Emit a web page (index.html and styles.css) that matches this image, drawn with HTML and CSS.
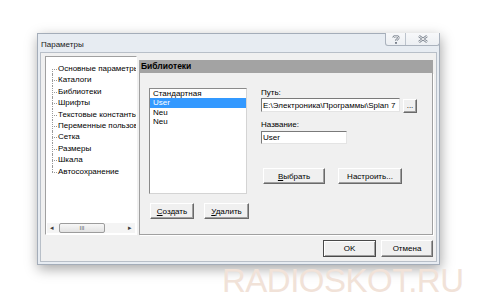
FILE: index.html
```html
<!DOCTYPE html>
<html lang="ru">
<head>
    <meta charset="UTF-8">
    <meta name="viewport" content="width=device-width, initial-scale=1.0">
    <title>Параметры</title>
    <link rel="stylesheet" href="styles.css">
</head>
<body>

<!-- Окно параметров -->
<div class="window">
    <div class="titlebar">
        <span class="title">Параметры</span>
        <div class="caption-buttons">
            <span class="cap-btn cap-help">
                <svg width="8" height="9" viewBox="0 0 8 9">
                    <path d="M1.5 2.8 C1.5 0.6 6.5 0.6 6.5 2.8 C6.5 4.4 4 4.2 4 6" fill="none" stroke="#7a828e" stroke-width="2.2"/>
                    <path d="M1.5 2.8 C1.5 0.6 6.5 0.6 6.5 2.8 C6.5 4.4 4 4.2 4 6" fill="none" stroke="#fff" stroke-width="0.9"/>
                    <rect x="3" y="7" width="2" height="1.8" fill="#7a828e"/>
                </svg>
            </span>
            <span class="cap-btn cap-close">
                <svg width="10" height="8" viewBox="0 0 10 8">
                    <path d="M1 1 L9 7 M9 1 L1 7" stroke="#7a828e" stroke-width="2.4"/>
                    <path d="M1 1 L9 7 M9 1 L1 7" stroke="#fff" stroke-width="0.9"/>
                </svg>
            </span>
        </div>
    </div>

    <div class="client">
        <div class="main-row">
            <!-- Дерево разделов -->
            <div class="tree">
                <ul class="tree-list">
                    <li>Основные параметры</li>
                    <li>Каталоги</li>
                    <li>Библиотеки</li>
                    <li>Шрифты</li>
                    <li>Текстовые константы</li>
                    <li>Переменные пользователя</li>
                    <li>Сетка</li>
                    <li>Размеры</li>
                    <li>Шкала</li>
                    <li>Автосохранение</li>
                </ul>
                <div class="hscroll">
                    <span class="arrow">&#9666;</span>
                    <span class="thumb">III</span>
                    <span class="track"></span>
                    <span class="arrow">&#9656;</span>
                </div>
            </div>

            <!-- Страница "Библиотеки" -->
            <div class="page">
                <div class="page-header">Библиотеки</div>
                <div class="page-body">
                    <div class="lib-col">
                        <ul class="listbox">
                            <li>Стандартная</li>
                            <li class="selected">User</li>
                            <li>Neu</li>
                            <li>Neu</li>
                        </ul>
                        <div class="lib-buttons">
                            <button class="btn btn-create"><u>С</u>оздать</button>
                            <button class="btn btn-delete"><u>У</u>далить</button>
                        </div>
                    </div>

                    <div class="props-col">
                        <label class="field-label">Путь:</label>
                        <div class="path-row">
                            <input type="text" class="text-field path-field" value="E:\Электроника\Программы\Splan 7">
                            <button class="btn btn-browse">...</button>
                        </div>
                        <label class="field-label name-label">Название:</label>
                        <input type="text" class="text-field name-field" value="User">
                        <div class="props-buttons">
                            <button class="btn btn-select"><u>В</u>ыбрать</button>
                            <button class="btn btn-setup">Настроить...</button>
                        </div>
                    </div>
                </div>
            </div>
        </div>

        <div class="footer">
            <button class="btn btn-ok">OK</button>
            <button class="btn btn-cancel">Отмена</button>
        </div>
    </div>
</div>

<div class="watermark">RADIOSKOT.RU</div>

</body>
</html>
```

FILE: styles.css
```css
/* Общий стиль страницы */
body {
    margin: 0;
    padding: 33px 0 0 37px;
    background-color: #ffffff;
    font-family: 'Liberation Sans', Arial, sans-serif;
    font-size: 8px;
    color: #000;
}

ul {
    list-style: none;
    margin: 0;
    padding: 0;
}

/* Окно */
.window {
    width: 403px;
    height: 232px;
    box-sizing: border-box;
    border: 1px solid #a4adb9;
    background-color: #e7ecf2;
    padding: 0 2px 2px 2px;
    display: flex;
    flex-direction: column;
    box-shadow: 1px 4px 12px rgba(0, 0, 0, 0.35);
}

.titlebar {
    height: 18px;
    display: flex;
    justify-content: space-between;
    align-items: flex-start;
}

.title {
    padding: 6px 0 0 1px;
    line-height: 10px;
    color: #1a1a1a;
}

.caption-buttons {
    display: flex;
    margin: -1px -3px 0 0;
    height: 12px;
    border: 1px solid #aab2bd;
    border-top: none;
    border-radius: 0 0 3px 3px;
    background: linear-gradient(#f7f8fa, #eceff3);
}

.cap-btn {
    display: flex;
    align-items: center;
    justify-content: center;
}

.cap-help {
    width: 19px;
    border-right: 1px solid #bcc3cc;
}

.cap-close {
    width: 33px;
}

/* Клиентская область */
.client {
    flex: 1;
    background-color: #f0f0f0;
    border: 1px solid #b8bfc8;
    padding: 3px 3px 0 4px;
    display: flex;
    flex-direction: column;
}

.main-row {
    display: flex;
    height: 179px;
}

/* Дерево */
.tree {
    width: 92px;
    flex-shrink: 0;
    box-sizing: border-box;
    background-color: #fff;
    border: 1px solid #a0a0a0;
    border-right-color: #fff;
    border-bottom-color: #fff;
    display: flex;
    flex-direction: column;
    overflow: hidden;
}

.tree-list {
    padding-top: 6px;
    white-space: nowrap;
}

.tree-list li {
    position: relative;
    line-height: 11.4px;
    padding-left: 12px;
}

.tree-list li::before {
    content: "";
    position: absolute;
    left: 6px;
    top: 6px;
    width: 5px;
    border-top: 1px dotted #9a9a9a;
}

.tree-list li::after {
    content: "";
    position: absolute;
    left: 6px;
    top: 0;
    bottom: 0;
    border-left: 1px dotted #9a9a9a;
}

.tree-list li:first-child::after {
    top: 6px;
}

.tree-list li:last-child::after {
    bottom: 5px;
}

/* Горизонтальная прокрутка */
.hscroll {
    margin: auto 1px 1px 1px;
    height: 10px;
    display: flex;
    align-items: stretch;
    background-color: #f4f4f4;
    color: #404040;
}

.hscroll .arrow {
    width: 10px;
    font-size: 7px;
    line-height: 10px;
    text-align: center;
}

.hscroll .thumb {
    width: 46px;
    margin-left: 2px;
    box-sizing: border-box;
    border: 1px solid #9c9c9c;
    border-radius: 2px;
    background: linear-gradient(#f7f7f7, #e2e2e2);
    font-size: 6px;
    line-height: 8px;
    text-align: center;
    color: #606060;
}

.hscroll .track {
    flex: 1;
}

/* Страница настроек */
.page {
    flex: 1;
    margin: 4px 0 0 2px;
    display: flex;
    flex-direction: column;
}

.page-header {
    height: 13px;
    line-height: 13px;
    padding-left: 2px;
    background-color: #a3a3a3;
    font-weight: bold;
    font-size: 8.5px;
}

.page-body {
    flex: 1;
    border: 1px solid #a0a0a0;
    border-top: none;
    box-shadow: 1px 1px 0 #fff;
    padding: 15px 0 0 9px;
    display: flex;
}

.lib-col {
    width: 100px;
}

.listbox {
    width: 98px;
    height: 106px;
    box-sizing: border-box;
    background-color: #fff;
    border: 1px solid;
    border-color: #8a8a8a #d4d4d4 #d4d4d4 #8a8a8a;
}

.listbox li {
    line-height: 9.3px;
    padding-left: 3px;
}

.listbox li.selected {
    background-color: #3399ff;
    color: #fff;
}

.lib-buttons {
    display: flex;
    gap: 10px;
    margin: 9px 0 0 1px;
}

/* Кнопки */
.btn {
    font-family: 'Liberation Sans', Arial, sans-serif;
    font-size: 8px;
    color: #000;
    height: 16px;
    padding: 0;
    background-color: #f0f0f0;
    border: 1px solid;
    border-color: #ffffff #6a6a6a #6a6a6a #ffffff;
    box-shadow: inset -1px -1px 0 #a0a0a0;
}

.btn-create { width: 44px; }
.btn-delete { width: 45px; }
.btn-select { width: 62px; }
.btn-setup  { width: 64px; }

.btn-browse {
    width: 14px;
    height: 14px;
    margin-top: 1px;
    line-height: 8px;
}

/* Поля */
.props-col {
    margin-left: 12px;
    display: flex;
    flex-direction: column;
    align-items: flex-start;
}

.field-label {
    line-height: 10px;
}

.name-label {
    margin-top: 7px;
    margin-bottom: 1px;
}

.path-row {
    display: flex;
    gap: 3px;
}

.text-field {
    font-family: 'Liberation Sans', Arial, sans-serif;
    font-size: 8px;
    box-sizing: border-box;
    margin: 0;
    padding: 0 1px;
    background-color: #fff;
    border: 1px solid;
    border-color: #7a7a7a #e4e4e4 #e4e4e4 #7a7a7a;
    outline: none;
}

.path-field {
    width: 139px;
    height: 14px;
}

.name-field {
    width: 86px;
    height: 13px;
}

.props-buttons {
    display: flex;
    gap: 13px;
    margin: 24px 0 0 2px;
}

/* Нижние кнопки */
.footer {
    display: flex;
    justify-content: flex-end;
    gap: 5px;
    margin-top: 5px;
}

.btn-ok {
    width: 53px;
    height: 17px;
    border-color: #4a4a4a;
    box-shadow: inset 1px 1px 0 #fff, inset -1px -1px 0 #a0a0a0;
}

.btn-cancel {
    width: 52px;
    height: 17px;
}

/* Водяной знак */
.watermark {
    margin: -1px 0 0 185px;
    font-size: 33px;
    line-height: 33px;
    color: #f1e2d8;
    letter-spacing: -0.5px;
}
```
